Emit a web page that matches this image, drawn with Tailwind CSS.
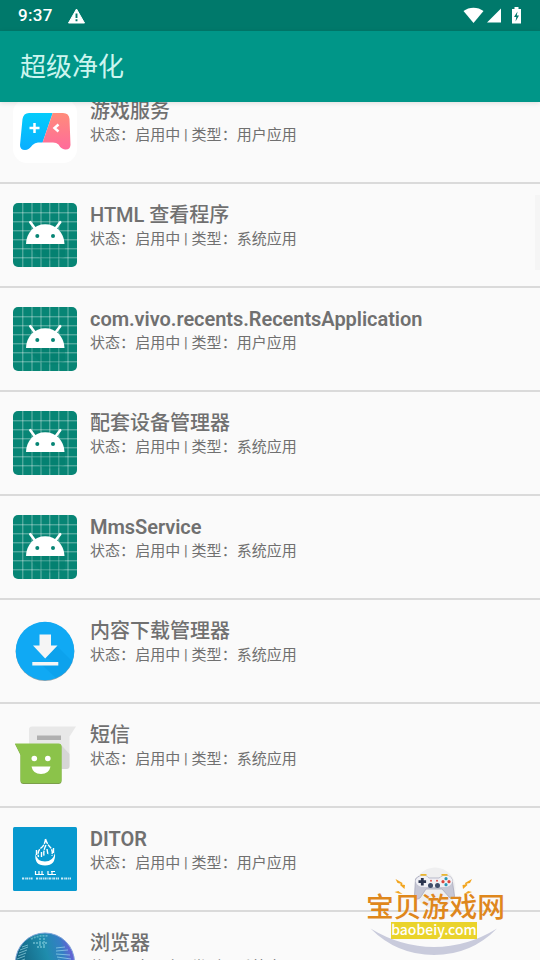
<!DOCTYPE html>
<html lang="zh-CN">
<head>
    <meta charset="UTF-8">
    <meta name="viewport" content="width=device-width, initial-scale=1.0">
    <title>超级净化</title>
    <script src="https://cdn.jsdelivr.net/npm/@tailwindcss/browser@4"></script>
</head>
<body class="bg-[#fafafa] font-[Roboto,'Noto_Sans_CJK_SC',sans-serif]">
    <!-- Shared icons -->
    <svg class="hidden">
        <symbol id="android" viewBox="0 0 64 64">
            <rect width="64" height="64" rx="5" fill="#078575"/>
            <path d="M9.800 0v64M19 0v64M28 0v64M36.800 0v64M45.800 0v64M55 0v64M0 9.800h64M0 18.800h64M0 27.800h64M0 36.800h64M0 45.800h64M0 54.800h64" stroke="#fff" stroke-opacity=".42" stroke-width="1"/>
            <path d="M13 41l15 15q14 4 24-2V41z" fill="#00796b" fill-opacity=".3"/>
            <path d="M17.300 19.200l4.500 6M47.200 19.200l-4.500 6" stroke="#fff" stroke-width="2.600" stroke-linecap="round"/>
            <path d="M13 41C13.300 29.500 21.500 21.300 32.200 21.300S51 29.500 51.500 41z" fill="#fff"/>
            <circle cx="24.300" cy="33" r="2" fill="#078575"/>
            <circle cx="40" cy="33" r="2" fill="#078575"/>
        </symbol>
    </svg>

    <div class="relative flex h-[960px] w-[540px] flex-col overflow-hidden">
        <!-- Status bar -->
        <div class="flex h-[31px] shrink-0 items-center bg-[#00796b] pl-[18px] pr-[17px] text-white">
            <span class="pt-px text-[17px] font-medium tracking-[0.3px]">9:37</span>
            <svg class="ml-[15px] h-4 w-[17px]" viewBox="0 0 17 16">
                <path d="M8.500 1L16.500 15H.5z" fill="#fff" stroke="#fff" stroke-linejoin="round"/>
                <path d="M8.500 5.500v4.500M8.500 11.300v2" stroke="#00796b" stroke-width="1.900"/>
            </svg>
            <svg class="ml-auto h-[18px] w-[60px]" viewBox="0 0 60 18">
                <path d="M.5 4C6-.5 15-.5 20.500 4L10.500 16z" fill="#fff"/>
                <path d="M38 1.500v14H24z" fill="#fff"/>
                <path d="M49 2h2.500V0h4v2H58v14.500h-9z" fill="#fff"/>
                <path d="M54.500 4.500L51 10h2.300l-.8 4.500L56 8.500h-2.200z" fill="#00796b"/>
            </svg>
        </div>

        <!-- App bar -->
        <header class="z-10 flex h-[71px] shrink-0 items-center bg-[#009688] pl-5 pt-0.5 shadow-[0_1px_5px_rgba(0,0,0,0.12)]">
            <h1 class="text-[26px] font-normal text-[#ccf5ef]">超级净化</h1>
        </header>

        <!-- App list -->
        <main class="min-h-0 flex-1 overflow-hidden">
            <ul class="-mt-[22px] text-[#707070]">
                <li class="flex h-[104px] gap-[13px] border-b-2 border-[#dadada] pl-[13px]">
                    <svg class="mt-[19px] size-16 shrink-0" viewBox="0 0 64 64">
                        <defs>
                            <linearGradient id="pad-blue" x2="0" y2="1"><stop offset=".2" stop-color="#04cdfb"/><stop offset=".8" stop-color="#0aaeff"/></linearGradient>
                            <linearGradient id="pad-pink" x2="0" y2="1"><stop offset=".2" stop-color="#ff8d79"/><stop offset=".8" stop-color="#ff6a9c"/></linearGradient>
                            <clipPath id="pad"><path d="M16 14H50Q56 14 56.500 20L57.500 46Q57 51 52 50.500Q48 50 45.500 45.500Q43.500 43.500 40 43.500H25Q22 43.500 19.500 46Q16 51 12 51Q7 51 7 46L9.500 20Q10.500 14 16 14z"/></clipPath>
                        </defs>
                        <rect width="64" height="64" rx="14" fill="#fff"/>
                        <g clip-path="url(#pad)">
                            <path d="M0 0H44.500L22.500 64H0z" fill="url(#pad-blue)"/>
                            <path d="M44.500 0H64v64H22.500z" fill="url(#pad-pink)"/>
                        </g>
                        <path d="M21.500 24v10M16.500 29h10M45.500 25.500L41.500 29l4 3.500" fill="none" stroke="#fff" stroke-width="2.500"/>
                    </svg>
                    <div class="pt-[19px]">
                        <h2 class="text-[20px]/6 font-medium">游戏服务</h2>
                        <p class="mt-px text-[15px]/[22px] tracking-[0.05px] text-[#707070]">状态：启用中 | 类型：用户应用</p>
                    </div>
                </li>
                <li class="flex h-[104px] gap-[13px] border-b-2 border-[#dadada] pl-[13px]">
                    <svg class="mt-[19px] size-16 shrink-0"><use href="#android"/></svg>
                    <div class="pt-[19px]">
                        <h2 class="text-[20px]/6 font-medium">HTML 查看程序</h2>
                        <p class="mt-px text-[15px]/[22px] tracking-[0.05px] text-[#707070]">状态：启用中 | 类型：系统应用</p>
                    </div>
                </li>
                <li class="flex h-[104px] gap-[13px] border-b-2 border-[#dadada] pl-[13px]">
                    <svg class="mt-[19px] size-16 shrink-0"><use href="#android"/></svg>
                    <div class="pt-[19px]">
                        <h2 class="text-[20px]/6 font-semibold tracking-[-0.05px]">com.vivo.recents.RecentsApplication</h2>
                        <p class="mt-px text-[15px]/[22px] tracking-[0.05px] text-[#707070]">状态：启用中 | 类型：用户应用</p>
                    </div>
                </li>
                <li class="flex h-[104px] gap-[13px] border-b-2 border-[#dadada] pl-[13px]">
                    <svg class="mt-[19px] size-16 shrink-0"><use href="#android"/></svg>
                    <div class="pt-[19px]">
                        <h2 class="text-[20px]/6 font-medium">配套设备管理器</h2>
                        <p class="mt-px text-[15px]/[22px] tracking-[0.05px] text-[#707070]">状态：启用中 | 类型：系统应用</p>
                    </div>
                </li>
                <li class="flex h-[104px] gap-[13px] border-b-2 border-[#dadada] pl-[13px]">
                    <svg class="mt-[19px] size-16 shrink-0"><use href="#android"/></svg>
                    <div class="pt-[19px]">
                        <h2 class="text-[20px]/6 font-semibold tracking-[-0.05px]">MmsService</h2>
                        <p class="mt-px text-[15px]/[22px] tracking-[0.05px] text-[#707070]">状态：启用中 | 类型：系统应用</p>
                    </div>
                </li>
                <li class="flex h-[104px] gap-[13px] border-b-2 border-[#dadada] pl-[13px]">
                    <svg class="mt-[19px] size-16 shrink-0" viewBox="0 0 64 64">
                        <circle cx="32" cy="32.600" r="29.300" fill="#90a4ae"/>
                        <circle cx="32" cy="32" r="29.300" fill="#10a9f4"/>
                        <path d="M44 27L60 43Q54 56 43 59L29 46H45V43L32 39z" fill="#0288d1" fill-opacity=".2"/>
                        <path d="M26.500 15.500h11.500v11h6.500L32.200 39.500 20 26.500h6.500zM19.300 43h26v3.600h-26z" fill="#f5f5f5"/>
                    </svg>
                    <div class="pt-[19px]">
                        <h2 class="text-[20px]/6 font-medium">内容下载管理器</h2>
                        <p class="mt-px text-[15px]/[22px] tracking-[0.05px] text-[#707070]">状态：启用中 | 类型：系统应用</p>
                    </div>
                </li>
                <li class="flex h-[104px] gap-[13px] border-b-2 border-[#dadada] pl-[13px]">
                    <svg class="mt-[19px] size-16 shrink-0" viewBox="0 0 64 64">
                        <path d="M19 3.500h44l-6.500 10V43q0 3-3 3H19q-3 0-3-3V6.500q0-3 3-3z" fill="#e8e8e8"/>
                        <path d="M49 23l7.500 8V43q0 3-3 3H49z" fill="#c9c9c9" fill-opacity=".6"/>
                        <path d="M24 12.500h24V17H24z" fill="#b0b0b0"/>
                        <path d="M2 21h43.500q3 0 3 3v34q0 3-3 3h-35q-3 0-3-3V32z" fill="#7b9f4a"/>
                        <path d="M2 20.500h43.500q3 0 3 3V57q0 3-3 3h-35q-3 0-3-3V31.500z" fill="#8bc34a"/>
                        <circle cx="21.300" cy="35.500" r="2.800" fill="#fff"/>
                        <circle cx="34.800" cy="35.500" r="2.800" fill="#fff"/>
                        <path d="M18.500 43.500h19Q36 51 28 51t-9.500-7.500z" fill="#fff"/>
                    </svg>
                    <div class="pt-[19px]">
                        <h2 class="text-[20px]/6 font-medium">短信</h2>
                        <p class="mt-px text-[15px]/[22px] tracking-[0.05px] text-[#707070]">状态：启用中 | 类型：系统应用</p>
                    </div>
                </li>
                <li class="flex h-[104px] gap-[13px] border-b-2 border-[#dadada] pl-[13px]">
                    <svg class="mt-[19px] size-16 shrink-0" viewBox="0 0 64 64">
                        <rect width="64" height="64" rx="1.500" fill="#0799cf"/>
                        <path d="M22.500 27Q21 38.500 32 38.500T42 26Q40 34.500 32 34.500T22.500 27z" fill="#fff"/>
                        <path d="M32.500 12Q34 17 37 20T39 29M32.500 12Q32 18 28 21T25.500 30M33 18Q30 24 31 29M34 22l1 6M23.500 23v5M28.500 25v5M40.500 21v6" fill="none" stroke="#fff" stroke-width="1.400" stroke-dasharray="5 1"/>
                        <path d="M22.500 44v4M26 44v4M29 44v4M35 44v4M39 44v4M22.500 47.500H31M35 47.500h8M38 44.500h4" stroke="#fff" stroke-width="1.200"/>
                        <path d="M9 51.500h11M23 51.500h23M48 51.500h10" stroke="#fff" stroke-width="2" stroke-opacity=".8" stroke-dasharray="2 .8 1 .5"/>
                    </svg>
                    <div class="pt-[19px]">
                        <h2 class="text-[20px]/6 font-semibold">DITOR</h2>
                        <p class="mt-px text-[15px]/[22px] tracking-[0.05px] text-[#707070]">状态：启用中 | 类型：用户应用</p>
                    </div>
                </li>
                <li class="flex h-[104px] gap-[13px] pl-[13px]">
                    <svg class="mt-[19px] size-16 shrink-0" viewBox="0 0 64 64">
                        <defs>
                            <linearGradient id="globe" x1="0" y1=".4" x2="1" y2=".1"><stop stop-color="#12627f"/><stop offset=".5" stop-color="#1f8dad"/><stop offset=".75" stop-color="#347fc4"/><stop offset="1" stop-color="#8a4be0"/></linearGradient>
                        </defs>
                        <circle cx="32" cy="31.500" r="29.500" fill="url(#globe)" stroke="#7aa3d8"/>
                        <g fill="none" stroke="#b4edf5" stroke-opacity=".55">
                            <path d="M9 16l6-2M7 19l8-3M6 22l8-3M5 25l8-3M4 28l8-3M4 31l8-3M43 17l9-1M43 20l12-1M43 23l14 1M44 26l14 2M45 29l14 2"/>
                            <path d="M18 8q8-4 17-3M20 12h14M24 16h8M27 7v9M31 7v8" stroke-width="1.800" stroke-opacity=".4" stroke-dasharray="2 1"/>
                        </g>
                    </svg>
                    <div class="pt-[19px]">
                        <h2 class="text-[20px]/6 font-medium">浏览器</h2>
                        <p class="mt-px text-[15px]/[22px] tracking-[0.05px] text-[#707070]">状态：启用中 | 类型：系统应用</p>
                    </div>
                </li>
            </ul>
        </main>

        <!-- Scrollbar thumb -->
        <div class="absolute right-0 top-[195px] h-[75px] w-[5px] bg-[#f5f5f5]"></div>

        <!-- Site badge -->
        <div class="absolute left-[355px] top-[860px] h-[100px] w-[160px]">
            <svg class="absolute inset-0" width="160" height="100" viewBox="0 0 160 100">
                <circle cx="80" cy="28" r="20.500" fill="#efeff0"/>
                <path d="M15.500 68.500Q46 87 79 87T142 68.500Q116 95 79 95T15.500 68.500z" fill="#c9cbdc"/>
                <path d="M60.500 19Q62 16 67 15.500Q72 15.500 74 18H84Q87 15.500 92 15.500Q96 16 97 19L99.500 36Q99 40.500 95 38L87 29H71L65 38Q60 41 59.500 36z" fill="#c6c7d5" stroke="#a9abbd" stroke-width=".8"/>
                <path d="M60.500 21q1-4 6.500-5.500 5 0 7 3h10q3-3 8-3 5 1 5.500 6-2 5.500-8 5.500H69q-7 0-8.500-6z" fill="#f0f0f5"/>
                <path d="M65.500 14.800h6M86.500 14.800h6" stroke="#eab52f" stroke-width="1.800"/>
                <path d="M67.300 18v7.500M63.500 21.700h7.600" stroke="#29334d" stroke-width="2.800"/>
                <circle cx="75.500" cy="25.500" r="2.500" fill="#3f4d6b"/>
                <circle cx="82.500" cy="25.500" r="2.500" fill="#3f4d6b"/>
                <circle cx="76" cy="20.700" r="1" fill="#e0524d"/>
                <circle cx="82" cy="20.700" r="1" fill="#e0524d"/>
                <circle cx="91" cy="18.700" r="1.600" fill="#2998b7"/>
                <circle cx="91" cy="24.700" r="1.600" fill="#2998b7"/>
                <circle cx="88" cy="21.700" r="1.600" fill="#d9453c"/>
                <circle cx="94" cy="21.700" r="1.600" fill="#d9453c"/>
                <path d="M40.500 19l7 4-.5 1.500 3 .5-.5 4-4.500-4 1-1.200-3.500-.8zM39.500 32l4-1 1 1 3 2-4-.5zM117 19l-7 4 .5 1.500-3 .5.5 4 4.500-4-1-1.200 3.500-.8zM117 32l-4-1-1 1-3 2 4-.5z" fill="#f2a51f"/>
            </svg>
            <div class="absolute left-[11px] top-[35px] whitespace-nowrap text-[27.800px]/[26px] font-medium text-[#df871c]">宝贝游戏网</div>
            <div class="absolute left-9 top-[62px] flex h-[17px] w-[86px] items-center justify-center bg-[#ead32b] pb-0.5 font-['Noto_Sans_CJK_SC',sans-serif] text-[14px]/[15px] font-medium text-white">baobeiy.com</div>
        </div>
    </div>
</body>
</html>
